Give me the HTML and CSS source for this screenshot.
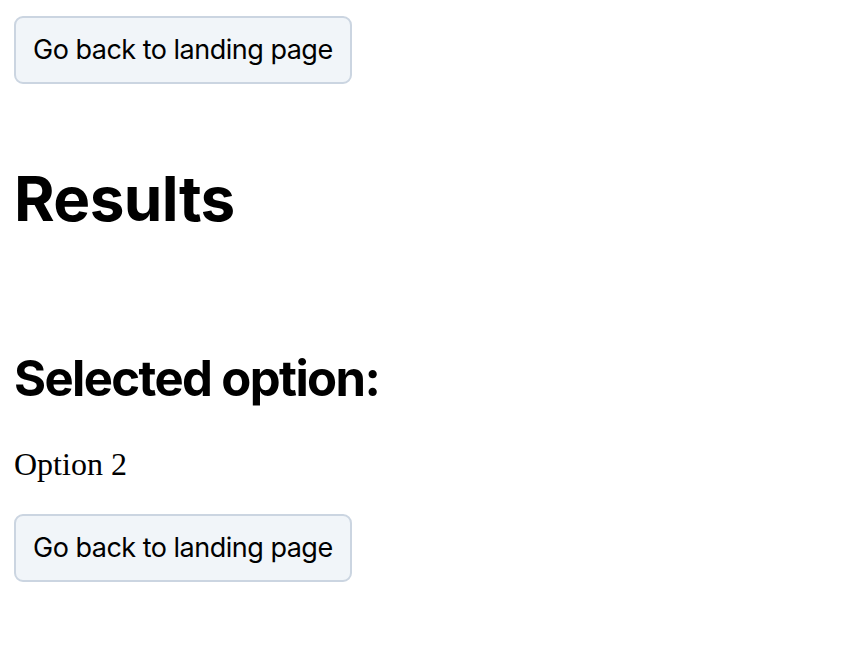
FILE: index.html
```html
<!DOCTYPE html>
<html lang="en">
<head>
<meta charset="utf-8">
<title>Results</title>
<link rel="stylesheet" href="styles.css">
</head>
<body>
<main class="page">
  <button class="btn" type="button">Go back to landing page</button>
  <h1 class="title">Results</h1>
  <h2 class="subtitle">Selected option:</h2>
  <p class="value">Option 2</p>
  <button class="btn" type="button">Go back to landing page</button>
</main>
</body>
</html>
```
FILE: styles.css
```css
html, body {
  margin: 0;
  padding: 0;
  background: #ffffff;
  color: #000000;
}
.page {
  display: flex;
  flex-direction: column;
  align-items: flex-start;
  padding: 16px 14px;
}
.btn {
  font-family: Inter, "Liberation Sans", sans-serif;
  font-size: 27px;
  letter-spacing: -0.5px;
  line-height: 34px;
  padding: 15px 17px;
  border: 2px solid #cbd5e1;
  border-radius: 9px;
  background: #f1f5f9;
  color: #000000;
  margin: 0;
}
.title {
  font-family: Inter, "Liberation Sans", sans-serif;
  font-weight: 700;
  font-size: 62px;
  letter-spacing: -0.6px;
  line-height: 76px;
  margin: 77px 0 0 0;
}
.subtitle {
  font-family: Inter, "Liberation Sans", sans-serif;
  font-weight: 700;
  font-size: 49px;
  letter-spacing: -1.6px;
  line-height: 62px;
  margin: 111px 0 0 0;
}
.value {
  font-family: "Liberation Serif", serif;
  font-size: 32px;
  line-height: 37px;
  margin: 36px 0 31px 0;
}
```
